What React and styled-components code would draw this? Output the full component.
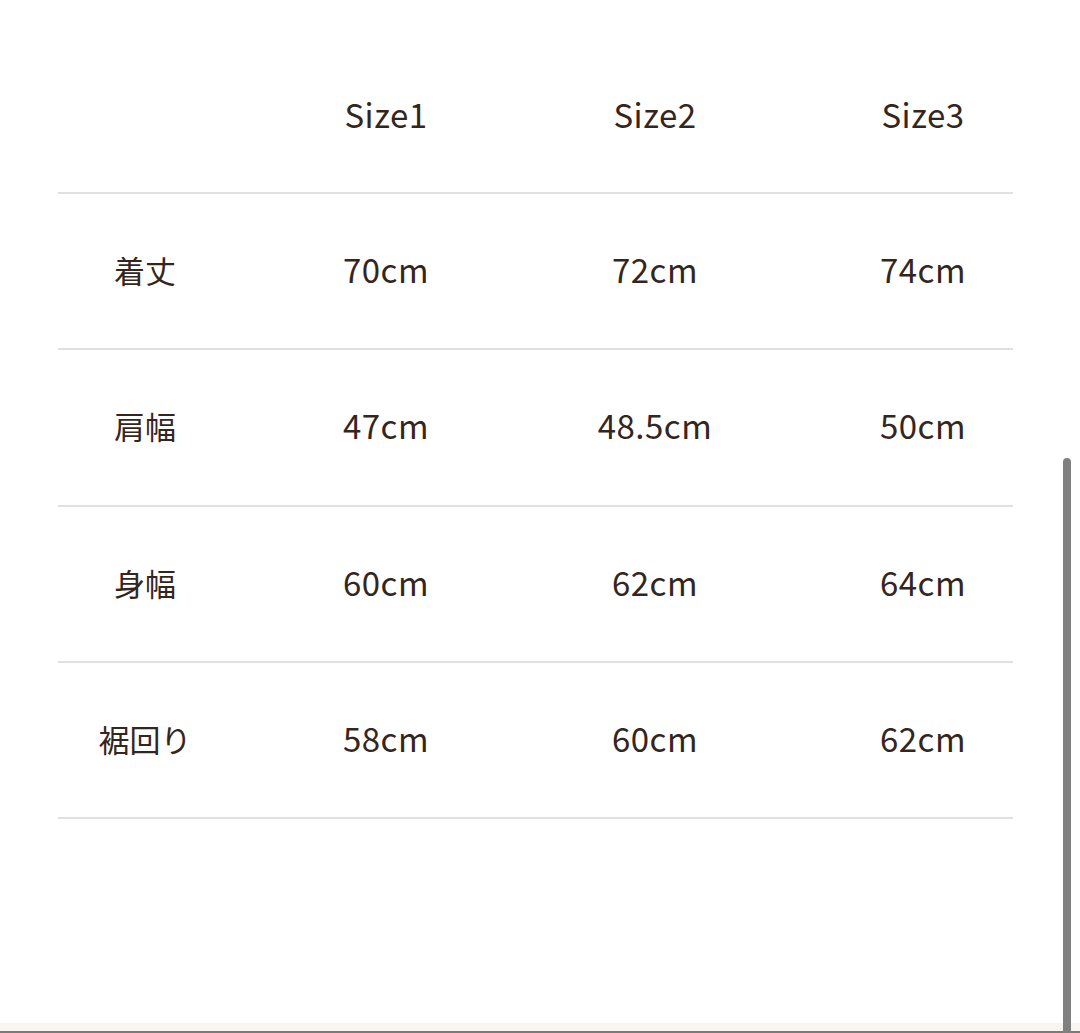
import React from 'react';
import styled, { createGlobalStyle } from 'styled-components';

const GlobalStyle = createGlobalStyle`
    html, body {
        margin: 0;
        padding: 0;
        background: #fff;
    }
    body {
        font-family: "Noto Sans CJK JP", "Noto Sans", sans-serif;
        color: #35261d;
    }
`

const Page = styled.div`
    position: relative;
    display: flex;
    flex-direction: column;
    height: 1033px;
    overflow: hidden;
`

const Content = styled.div`
    flex: 1;
    padding: 38px 0 0 58px;
`

const Table = styled.div`
    display: flex;
    flex-direction: column;
    width: 955px;
`

const Row = styled.div`
    display: grid;
    grid-template-columns: 174px 308px 230px 306px;
    align-items: center;
    height: ${props => props.header ? '154px' : '154.3px'};
    border-bottom: 2.5px solid #e2dfe0;
`

const Cell = styled.div`
    text-align: center;
    font-size: ${props => props.label ? '31px' : '33px'};
    line-height: 1;
    letter-spacing: ${props => props.label ? '0' : '0.5px'};
    margin-top: ${props => props.header ? '-2px' : '-3px'};
`

const Footer = styled.div`
    height: 8px;
    background: #f8f5ef;
    border-bottom: 2px solid #7a7a7a;
`

const Scrollbar = styled.div`
    position: absolute;
    left: 1063px;
    top: 458px;
    bottom: 0;
    width: 8px;
    background: #808080;
    border-radius: 4px 4px 0 0;
`

const sizes = ['Size1', 'Size2', 'Size3'];

const rows = [
    ['着丈', '70cm', '72cm', '74cm'],
    ['肩幅', '47cm', '48.5cm', '50cm'],
    ['身幅', '60cm', '62cm', '64cm'],
    ['裾回り', '58cm', '60cm', '62cm'],
];

export default function App() {
    return <Page>
        <GlobalStyle />
        <Content>
            <Table>
                <Row header>
                    <Cell header label />
                    {sizes.map(s => <Cell header key={s}>{s}</Cell>)}
                </Row>
                {rows.map(r => (
                    <Row key={r[0]}>
                        {r.map((v, i) => <Cell key={i} label={i === 0}>{v}</Cell>)}
                    </Row>
                ))}
            </Table>
        </Content>
        <Footer />
        <Scrollbar />
    </Page>
}
